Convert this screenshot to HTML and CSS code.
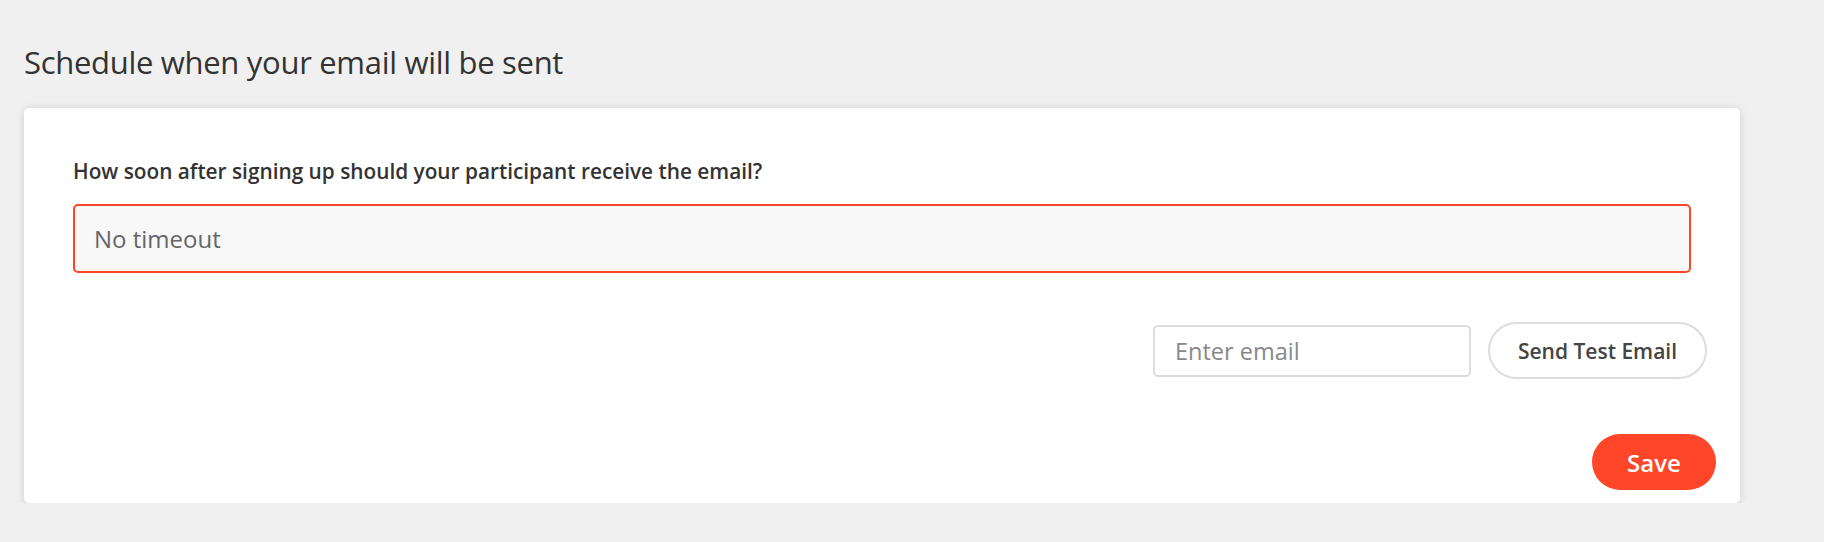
FILE: index.html
```html
<!DOCTYPE html>
<html lang="en">
<head>
<meta charset="utf-8">
<title>Schedule email</title>
<link rel="stylesheet" href="styles.css">
</head>
<body>
  <main class="page">
    <h1 class="page-title">Schedule when your email will be sent</h1>
    <section class="card">
      <label class="field-label">How soon after signing up should your participant receive the email?</label>
      <div class="select-box">No timeout</div>
      <div class="test-row">
        <div class="email-input">Enter email</div>
        <button class="btn-outline">Send Test Email</button>
      </div>
      <div class="save-row">
        <button class="btn-primary">Save</button>
      </div>
    </section>
  </main>
</body>
</html>
```
FILE: styles.css
```css
* { box-sizing: border-box; }
html, body {
  margin: 0;
  padding: 0;
  background: #f0f0f0;
  font-family: "Open Sans", "Noto Sans", "Liberation Sans", sans-serif;
  color: #333;
}
.page {
  padding: 40px 0 0 24px;
}
.page-title {
  margin: 0 0 24px 0;
  font-size: 31px;
  line-height: 44px;
  font-weight: 400;
  letter-spacing: -0.3px;
  color: #333;
}
.card {
  width: 1716px;
  height: 395px;
  background: #fff;
  border-radius: 5px;
  box-shadow: 0 1px 8px rgba(0, 0, 0, 0.15);
  padding: 49px 24px 13px 49px;
  display: flex;
  flex-direction: column;
}
.field-label {
  display: block;
  font-size: 20.8px;
  line-height: 28px;
  font-weight: 600;
  color: #333;
}
.select-box {
  margin: 19px 25px 0 0;
  height: 69px;
  border: 2px solid #ff4628;
  border-radius: 5px;
  background: #f8f8f8;
  display: flex;
  align-items: center;
  padding-left: 19px;
  font-size: 24px;
  color: #666;
}
.test-row {
  margin: 49px 9px 0 0;
  display: flex;
  justify-content: flex-end;
  align-items: center;
  gap: 17px;
}
.email-input {
  width: 318px;
  height: 52px;
  border: 2px solid #ddd;
  border-radius: 5px;
  display: flex;
  align-items: center;
  padding-left: 20px;
  font-size: 23.5px;
  color: #888;
}
.btn-outline {
  height: 57px;
  width: 219px;
  border: 2px solid #ddd;
  border-radius: 29px;
  background: #fff;
  font-family: inherit;
  font-size: 21px;
  font-weight: 600;
  color: #444;
  padding: 0;
}
.save-row {
  margin-top: 55px;
  display: flex;
  justify-content: flex-end;
}
.btn-primary {
  width: 124px;
  height: 56px;
  border: none;
  border-radius: 28px;
  background: #ff4628;
  color: #fff;
  font-family: inherit;
  font-size: 24px;
  font-weight: 600;
  padding: 0;
}
```
